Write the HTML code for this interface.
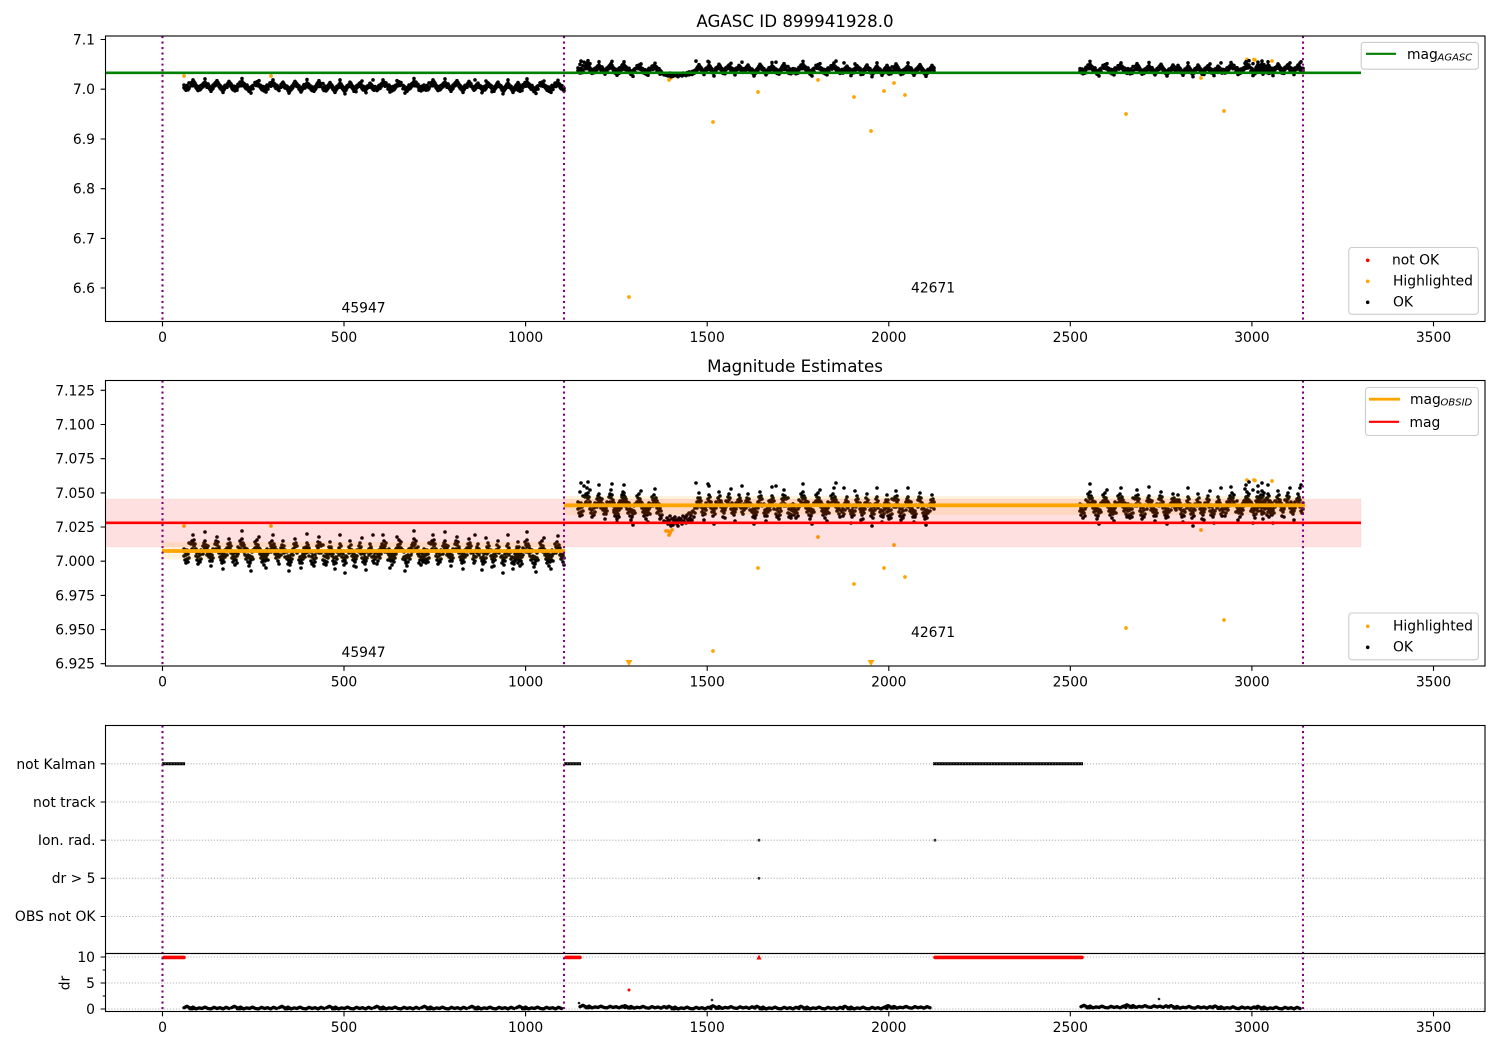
<!DOCTYPE html>
<html><head><meta charset="utf-8"><title>AGASC ID 899941928.0</title>
<style>
html,body{margin:0;padding:0;background:#fff;width:1500px;height:1050px;overflow:hidden}
svg{display:block}
text{font-family:"DejaVu Sans",sans-serif;font-size:13.89px;fill:#000}
.e{text-anchor:end}.m{text-anchor:middle}
.t{font-size:16.67px;text-anchor:middle}
.s{font-size:10px;font-style:italic}
.leg{fill:#fff;fill-opacity:.8;stroke:#ccc;stroke-width:1.1}
.sp{fill:none;stroke:#000;stroke-width:1.1}
.pur{stroke:#800080;stroke-width:2.08;stroke-dasharray:2.08 3.44;fill:none}
.grid{stroke:#b0b0b0;stroke-width:1.1;stroke-dasharray:1.1 1.83;fill:none}
</style></head><body>
<svg id="s" width="1500" height="1050" viewBox="0 0 1500 1050" xmlns="http://www.w3.org/2000/svg">
<defs>
<clipPath id="c1"><rect x="105.5" y="36" width="1379.5" height="285.5"/></clipPath>
<clipPath id="c2"><rect x="105.5" y="380.5" width="1379.5" height="285.5"/></clipPath>
<path id="A" vector-effect="non-scaling-stroke" d="M0 -3h.01M0 4h.01M1 8h.01M1 0h.01M2 11h.01M2 3h.01M3 7h.01M3 -2h.01M4 10h.01M4 2h.01M5 6h.01M5 -9h.01M7 -1h.01M7 -8h.01M8 -11h.01M8 -3h.01M9 -9h.01M9 -1h.01M9 -17h.01M10 -6h.01M10 -12h.01M11 -2h.01M11 -8h.01M12 4h.01M12 -3h.01M13 8h.01M13 1h.01M14 5h.01M14 12h.01M15 9h.01M15 1h.01M16 3h.01M16 10h.01M17 7h.01M17 -2h.01M19 2h.01M19 -6h.01M20 -9h.01M20 -2h.01M21 -11h.01M21 -4h.01M21 -20h.01M22 -7h.01M22 -1h.01M23 -4h.01M23 3h.01M24 1h.01M24 -6h.01M25 5h.01M25 -1h.01M26 9h.01M26 2h.01M27 14h.01M27 6h.01M28 3h.01M28 9h.01M29 6h.01M29 -3h.01M31 -1h.01M31 -8h.01M32 -3h.01M32 -11h.01M33 -7h.01M33 -15h.01M34 -10h.01M34 -3h.01M35 -5h.01M35 1h.01M36 -2h.01M36 5h.01M37 8h.01M37 1h.01M38 4h.01M38 11h.01M39 7h.01M39 17h.01M40 2h.01M40 10h.01M41 5h.01M41 -2h.01M43 -4h.01M43 3h.01M44 -8h.01M44 -1h.01M45 -13h.01M45 -5h.01M46 -9h.01M46 -3h.01M47 -6h.01M47 1h.01"/>
<path id="B" vector-effect="non-scaling-stroke" d="M0 5h.01M0 -2h.01M1 9h.01M1 2h.01M2 6h.01M2 -1h.01M3 12h.01M3 4h.01M4 7h.01M4 0h.01M5 3h.01M5 10h.01M6 1h.01M6 -6h.01M8 -4h.01M8 -12h.01M9 -2h.01M9 -9h.01M10 -7h.01M10 -14h.01M10 -22h.01M11 -3h.01M11 -10h.01M12 -8h.01M12 -1h.01M13 -5h.01M13 2h.01M14 -2h.01M14 6h.01M15 3h.01M15 -4h.01M16 9h.01M16 2h.01M17 5h.01M17 13h.01M18 10h.01M18 3h.01M19 7h.01M19 18h.01M20 4h.01M20 -1h.01M21 6h.01M21 -3h.01M23 -5h.01M23 -11h.01M24 -3h.01M24 -9h.01M25 -13h.01M25 -6h.01M26 -2h.01M26 -8h.01M27 -16h.01M27 -5h.01M28 1h.01M28 -4h.01M29 5h.01M29 -2h.01M30 3h.01M30 9h.01M31 7h.01M31 0h.01M32 12h.01M32 4h.01M33 8h.01M33 1h.01M34 5h.01M34 15h.01M35 2h.01M35 -4h.01M36 0h.01M36 7h.01M38 -3h.01M38 -10h.01M39 -7h.01M39 -1h.01M40 -12h.01M40 -5h.01M41 -18h.01M41 -8h.01M42 -3h.01M42 -9h.01M43 -6h.01M43 1h.01M44 -1h.01M44 5h.01M45 3h.01M45 -3h.01M46 8h.01M46 1h.01M47 4h.01M47 11h.01"/>
<path id="C" vector-effect="non-scaling-stroke" d="M0 -4h.01M0 2h.01M1 -8h.01M1 -1h.01M2 -5h.01M2 -13h.01M3 -2h.01M3 -8h.01M4 1h.01M4 -5h.01M5 6h.01M5 -1h.01M6 3h.01M6 9h.01M7 7h.01M7 14h.01M8 2h.01M8 8h.01M9 4h.01M9 -3h.01M11 -7h.01M11 0h.01M12 -5h.01M12 -11h.01M12 -20h.01M13 -2h.01M13 -9h.01M14 2h.01M14 -4h.01M15 6h.01M15 -1h.01M16 10h.01M16 3h.01M17 5h.01M17 18h.01M18 8h.01M18 1h.01M19 2h.01M19 -4h.01M21 -2h.01M21 -8h.01M22 -6h.01M22 -14h.01M23 -3h.01M23 -10h.01M24 1h.01M24 -5h.01M25 5h.01M25 -2h.01M26 3h.01M26 11h.01M27 7h.01M27 0h.01M28 12h.01M28 4h.01M29 1h.01M29 -5h.01M31 -3h.01M31 -9h.01M32 -12h.01M32 -6h.01M33 -1h.01M33 -8h.01M34 -17h.01M34 3h.01M35 -3h.01M35 7h.01M36 4h.01M36 -1h.01M37 9h.01M37 2h.01M38 6h.01M38 15h.01M39 3h.01M39 -3h.01M41 -6h.01M41 0h.01M42 -4h.01M42 -11h.01M43 -2h.01M43 -8h.01M44 2h.01M44 -5h.01M45 6h.01M45 -20h.01M46 1h.01M46 8h.01M47 -2h.01M47 4h.01"/>
<path id="DIP" vector-effect="non-scaling-stroke" d="M657 513h.01M660 519h.01M662 515h.01M664 521h.01M666 522h.01M667 518h.01M668 524h.01M669 520h.01M670 516h.01M671 523h.01M672 519h.01M673 525h.01M674 521h.01M675 517h.01M676 523h.01M677 520h.01M678 526h.01M679 518h.01M680 522h.01M681 519h.01M682 524h.01M683 516h.01M684 521h.01M685 518h.01M686 523h.01M687 515h.01M688 520h.01M689 513h.01M690 518h.01M691 515h.01M692 520h.01M693 511h.01M694 517h.01M695 513h.01M668 521h.01M671 526h.01M674 518h.01M677 524h.01M680 519h.01M683 522h.01M686 517h.01M689 521h.01M692 512h.01M695 508h.01"/>
<path id="X" vector-effect="non-scaling-stroke" d="M581 483h.01M584 486h.01M588 482h.01M590 490h.01M580 492h.01M696 483h.01M708 484h.01M1246 485h.01M1249 482h.01M1253 490h.01M1258 486h.01M1300 488h.01M612 484h.01M776 486h.01M836 483h.01"/>
<g id="cloud">
<use href="#A" transform="translate(184 552)"/>
<use href="#B" transform="translate(232 553)"/>
<use href="#A" transform="translate(328 554) scale(-1 1)"/>
<use href="#C" transform="translate(328 555)"/>
<use href="#B" transform="translate(424 553) scale(-1 1)"/>
<use href="#A" transform="translate(424 552)"/>
<use href="#C" transform="translate(520 555) scale(-1 1)"/>
<use href="#B" transform="translate(517 554)"/>
<use href="#A" transform="translate(578 505)"/>
<use href="#B" transform="translate(614 507)"/>
<use href="#DIP"/>
<use href="#C" transform="translate(697 506)"/>
<use href="#A" transform="translate(793 507) scale(-1 1)"/>
<use href="#B" transform="translate(793 506)"/>
<use href="#C" transform="translate(889 508) scale(-1 1)"/>
<use href="#A" transform="translate(887 508)"/>
<use href="#B" transform="translate(1080 506)"/>
<use href="#A" transform="translate(1128 507)"/>
<use href="#C" transform="translate(1176 508)"/>
<use href="#B" transform="translate(1272 505) scale(-1 1)"/>
<use href="#C" transform="translate(1256 505)"/>
<use href="#X"/>
</g>
<path id="D" d="M0 0l3-1.4 3 1.6 3 .8-3 0 3-1.6 3 1.8 3-1 3 .6 3-1.4 3 1.4 3 .4 3-1.6 3 1.2 3-.8 3 1.2 3-1.6 3 1.2"/>
</defs>

<!-- panel 3 grid -->
<path class="grid" d="M105.5 763.8H1485M105.5 802H1485M105.5 840.2H1485M105.5 878.3H1485M105.5 916.5H1485M105.5 957H1485M105.5 983H1485M105.5 1009H1485"/>

<!-- panel 1 points -->
<g clip-path="url(#c1)">
<path d="M184 76h.01M271 76h.01M629 297h.01M713 122h.01M758 92h.01M818 80h.01M854 97h.01M884 91h.01M871 131h.01M905 95h.01M894 83h.01M1126 114h.01M1201 78h.01M1224 111h.01M669 80h.01M671 78h.01M1247 59.5h.01M1254 59.5h.01M1255 60h.01M1272 61h.01" fill="none" stroke="#ffa500" stroke-width="3.7" stroke-linecap="round"/>
<use href="#cloud" transform="translate(0 -114.4) scale(1 .3633)" fill="none" stroke="#000" stroke-width="3.6" stroke-linecap="round"/>
</g>
<path d="M105.5 72.8H1361" stroke="#008000" stroke-width="2.6" fill="none"/>

<!-- panel 2 points -->
<g clip-path="url(#c2)">
<path d="M184 526h.01M271 526h.01M668 531h.01M670 533h.01M672 530h.01M669 535h.01M666 531h.01M758 568h.01M818 537h.01M854 584h.01M884 568h.01M894 545h.01M905 577h.01M713 651h.01M1126 628h.01M1201 530h.01M1224 620h.01M1247 480h.01M1254 480h.01M1255 480.5h.01M1272 481h.01" fill="none" stroke="#ffa500" stroke-width="3.7" stroke-linecap="round"/>
<use href="#cloud" fill="none" stroke="#000" stroke-width="3.6" stroke-linecap="round"/>
</g>
<rect x="105.5" y="499" width="1255.5" height="48" fill="#ff0000" fill-opacity=".12" stroke="#ff0000" stroke-opacity=".04"/>
<rect x="162" y="542" width="403" height="17.5" fill="#ffa500" fill-opacity=".13"/>
<rect x="564" y="496" width="741" height="19" fill="#ffa500" fill-opacity=".13"/>
<path d="M162 551H565M564 505.3H1305" stroke="#ffa500" stroke-width="3.8" fill="none"/>
<path d="M105.5 522.8H1361" stroke="#ff0000" stroke-width="2.6" fill="none"/>
<polygon points="625.5,660 632.5,660 629,666" fill="#ffa500"/>
<polygon points="867.5,660 874.5,660 871,666" fill="#ffa500"/>

<!-- status rows -->
<path d="M162 763.8H185M564 763.8H581M933 763.8H1083" stroke="#000" stroke-width="3" fill="none"/>
<path d="M162 763.8H185M564 763.8H581M933 763.8H1083" stroke="#777" stroke-width="1" stroke-dasharray="1 1.9" fill="none"/>
<path d="M759 840.2h.01M935 840.2h.01M759 878.3h.01" stroke="#333" stroke-width="2.8" stroke-linecap="round" fill="none"/>
<path d="M164 957.4H184M566 957.4H580M935 957.4H1082" stroke="#f00" stroke-width="3.6" stroke-linecap="round" fill="none"/>
<polygon points="756.5,959.5 761.5,959.5 759,954.5" fill="#f00"/>
<path d="M629 990h.01" stroke="#f00" stroke-width="3" stroke-linecap="round" fill="none"/>
<g fill="none" stroke="#000" stroke-width="3.3" stroke-linejoin="round" stroke-linecap="round">
<use href="#D" transform="translate(184 1007.7)"/><use href="#D" transform="translate(231.5 1007.7)"/><use href="#D" transform="translate(279 1007.7)"/><use href="#D" transform="translate(326.5 1007.7)"/><use href="#D" transform="translate(374 1007.7)"/><use href="#D" transform="translate(421.5 1007.7)"/><use href="#D" transform="translate(469 1007.7)"/><use href="#D" transform="translate(516.5 1007.7)"/>
<use href="#D" transform="translate(580 1006.7)"/><use href="#D" transform="translate(622 1007)"/><use href="#D" transform="translate(666 1007.7)"/><use href="#D" transform="translate(710 1007.2)"/><use href="#D" transform="translate(754 1007.7)"/><use href="#D" transform="translate(798 1007.7)"/><use href="#D" transform="translate(842 1007.7)"/><use href="#D" transform="translate(885 1007)"/>
<use href="#D" transform="translate(1081 1006.7)"/><use href="#D" transform="translate(1124 1006.2)"/><use href="#D" transform="translate(1168 1007)"/><use href="#D" transform="translate(1212 1007.4)"/><use href="#D" transform="translate(1255 1007.7)"/>
</g>
<path d="M712 1000h.01M1159 999h.01M579 1003h.01" stroke="#222" stroke-width="2.6" stroke-linecap="round" fill="none"/>

<!-- vertical lines -->
<path class="pur" d="M162.5 36V321.5M564 36V321.5M1303 36V321.5M162.5 380.5V666M564 380.5V666M1303 380.5V666M162.5 725.5V1011.5M564 725.5V1011.5M1303 725.5V1011.5"/>

<!-- spines -->
<rect class="sp" x="105.5" y="36" width="1379.5" height="285.5"/>
<rect class="sp" x="105.5" y="380.5" width="1379.5" height="285.5"/>
<rect class="sp" x="105.5" y="725.5" width="1379.5" height="228"/>
<rect class="sp" x="105.5" y="953.5" width="1379.5" height="58"/>

<!-- ticks -->
<path class="sp" d="M162.5 321.5v4.9M344 321.5v4.9M525.6 321.5v4.9M707.2 321.5v4.9M888.8 321.5v4.9M1070.3 321.5v4.9M1251.9 321.5v4.9M1433.5 321.5v4.9
M162.5 666v4.9M344 666v4.9M525.6 666v4.9M707.2 666v4.9M888.8 666v4.9M1070.3 666v4.9M1251.9 666v4.9M1433.5 666v4.9
M162.5 1011.5v4.9M344 1011.5v4.9M525.6 1011.5v4.9M707.2 1011.5v4.9M888.8 1011.5v4.9M1070.3 1011.5v4.9M1251.9 1011.5v4.9M1433.5 1011.5v4.9
M105.5 39.5h-4.9M105.5 89.2h-4.9M105.5 139h-4.9M105.5 188.7h-4.9M105.5 238.4h-4.9M105.5 288h-4.9
M105.5 390.3h-4.9M105.5 424.5h-4.9M105.5 458.7h-4.9M105.5 492.9h-4.9M105.5 527h-4.9M105.5 561.2h-4.9M105.5 595.4h-4.9M105.5 629.6h-4.9M105.5 663.7h-4.9
M105.5 763.8h-4.9M105.5 802h-4.9M105.5 840.2h-4.9M105.5 878.3h-4.9M105.5 916.5h-4.9
M105.5 957h-4.9M105.5 983h-4.9M105.5 1009h-4.9M105.5 970h-2.8M105.5 996h-2.8"/>

<!-- titles -->
<text class="t" x="795" y="27">AGASC ID 899941928.0</text>
<text class="t" x="795" y="372">Magnitude Estimates</text>

<!-- x tick labels -->
<text x="162.5" y="342" text-anchor="middle">0</text><text x="344" y="342" text-anchor="middle">500</text><text x="525.6" y="342" text-anchor="middle">1000</text><text x="707.2" y="342" text-anchor="middle">1500</text><text x="888.8" y="342" text-anchor="middle">2000</text><text x="1070.3" y="342" text-anchor="middle">2500</text><text x="1251.9" y="342" text-anchor="middle">3000</text><text x="1433.5" y="342" text-anchor="middle">3500</text>
<text x="162.5" y="686.5" text-anchor="middle">0</text><text x="344" y="686.5" text-anchor="middle">500</text><text x="525.6" y="686.5" text-anchor="middle">1000</text><text x="707.2" y="686.5" text-anchor="middle">1500</text><text x="888.8" y="686.5" text-anchor="middle">2000</text><text x="1070.3" y="686.5" text-anchor="middle">2500</text><text x="1251.9" y="686.5" text-anchor="middle">3000</text><text x="1433.5" y="686.5" text-anchor="middle">3500</text>
<text x="162.5" y="1032" text-anchor="middle">0</text><text x="344" y="1032" text-anchor="middle">500</text><text x="525.6" y="1032" text-anchor="middle">1000</text><text x="707.2" y="1032" text-anchor="middle">1500</text><text x="888.8" y="1032" text-anchor="middle">2000</text><text x="1070.3" y="1032" text-anchor="middle">2500</text><text x="1251.9" y="1032" text-anchor="middle">3000</text><text x="1433.5" y="1032" text-anchor="middle">3500</text>

<!-- y tick labels -->
<text class="e" x="95" y="44.5">7.1</text><text class="e" x="95" y="94.2">7.0</text><text class="e" x="95" y="144">6.9</text><text class="e" x="95" y="193.7">6.8</text><text class="e" x="95" y="243.4">6.7</text><text class="e" x="95" y="293">6.6</text>
<text class="e" x="95" y="395.3">7.125</text><text class="e" x="95" y="429.5">7.100</text><text class="e" x="95" y="463.7">7.075</text><text class="e" x="95" y="497.9">7.050</text><text class="e" x="95" y="532">7.025</text><text class="e" x="95" y="566.2">7.000</text><text class="e" x="95" y="600.4">6.975</text><text class="e" x="95" y="634.6">6.950</text><text class="e" x="95" y="668.7">6.925</text>
<text class="e" x="95.5" y="769">not Kalman</text><text class="e" x="95.5" y="807">not track</text><text class="e" x="95.5" y="845">Ion. rad.</text><text class="e" x="95.5" y="883">dr &gt; 5</text><text class="e" x="95.5" y="921">OBS not OK</text>
<text class="e" x="95" y="962">10</text><text class="e" x="95" y="988">5</text><text class="e" x="95" y="1014">0</text>
<text class="m" transform="translate(69.5 983) rotate(-90)">dr</text>

<!-- annotations -->
<text x="341.5" y="312.5">45947</text><text x="911" y="292.5">42671</text>
<text x="341.5" y="657">45947</text><text x="911" y="637">42671</text>

<!-- legends -->
<rect class="leg" x="1361.2" y="42.4" width="117.2" height="26.8" rx="3"/>
<path d="M1366 53.8H1396" stroke="#008000" stroke-width="2.08"/>
<text x="1407" y="59">mag</text><text class="s" x="1437.5" y="60.7">AGASC</text>

<rect class="leg" x="1348.8" y="247.5" width="129.5" height="66.8" rx="3"/>
<circle cx="1367.7" cy="260.3" r="1.8" fill="#f00"/><circle cx="1367.7" cy="281.3" r="1.8" fill="#ffa500"/><circle cx="1367.7" cy="302.3" r="1.8" fill="#000"/>
<text x="1392" y="264.5">not OK</text><text x="1393" y="285.5">Highlighted</text><text x="1393" y="306.5">OK</text>

<rect class="leg" x="1365.5" y="387.5" width="112.8" height="48" rx="3"/>
<path d="M1369 399.2H1400" stroke="#ffa500" stroke-width="2.8"/>
<path d="M1369 421.8H1399" stroke="#f00" stroke-width="2.08"/>
<text x="1410" y="404">mag</text><text class="s" x="1440.5" y="405.7">OBSID</text>
<text x="1409.5" y="427">mag</text>

<rect class="leg" x="1348.8" y="613" width="129.5" height="46.8" rx="3"/>
<circle cx="1367.7" cy="626.3" r="1.8" fill="#ffa500"/><circle cx="1367.7" cy="647.3" r="1.8" fill="#000"/>
<text x="1393" y="630.5">Highlighted</text><text x="1393" y="651.5">OK</text>
</svg>
</body></html>
